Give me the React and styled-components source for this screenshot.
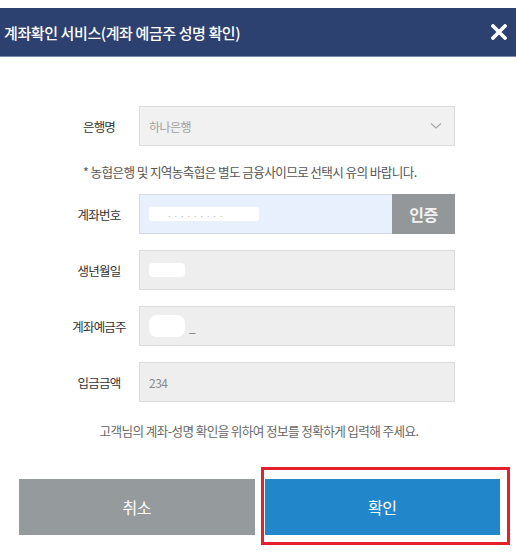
import React from 'react';
import styled, { createGlobalStyle } from 'styled-components';

const GlobalStyle = createGlobalStyle`
  html, body {
    margin: 0;
    padding: 0;
    background: #ffffff;
  }

  body {
    font-family: "Noto Sans CJK KR", "Noto Sans", sans-serif;
  }
`;

const Page = styled.div`
  width: 516px;
  height: 553px;
  padding-top: 8px;
  box-sizing: border-box;
  position: relative;
  overflow: hidden;
`;

const Header = styled.div`
  height: 48px;
  background: #2d4170;
  border-bottom: 1px solid #7d8bab;
  display: flex;
  align-items: center;
  justify-content: space-between;
  padding: 0 8px 0 4px;
`;

const Title = styled.h1`
  margin: 0;
  color: #ffffff;
  font-size: 15px;
  font-weight: 500;
  letter-spacing: -0.4px;
`;

const CloseButton = styled.button`
  border: 0;
  background: none;
  padding: 0;
  width: 18px;
  height: 18px;
  display: flex;
  align-items: center;
  justify-content: center;
`;

const Form = styled.div`
  display: flex;
  flex-direction: column;
  padding: 49px 0 0 59px;
`;

const Row = styled.div`
  display: flex;
  align-items: center;
  height: 40px;
  margin-bottom: ${(props) => props.gap ?? 16}px;
`;

const Label = styled.label`
  width: 80px;
  text-align: center;
  font-size: 12.5px;
  letter-spacing: -0.8px;
  color: #333333;
`;

const Field = styled.div`
  width: 316px;
  height: 40px;
  box-sizing: border-box;
  border: 1px solid #dcdcdc;
  background: #eeeeee;
  display: flex;
  align-items: center;
  padding-left: 9px;
  font-size: 12px;
  letter-spacing: -0.5px;
  color: #8a8a8a;
  position: relative;
`;

const SelectField = styled(Field)`
  background: #f1f1f1;
  justify-content: space-between;
  padding-right: 12px;
  color: #a0a0a0;
`;

const AccountGroup = styled.div`
  width: 316px;
  height: 40px;
  display: flex;
`;

const AccountInput = styled(Field)`
  flex: 1;
  width: auto;
  background: #e8f0fe;
  border-color: #d3d9e3;
  border-right: 0;
`;

const VerifyButton = styled.button`
  width: 63px;
  height: 40px;
  border: 0;
  background: #939799;
  color: #f2f2f2;
  font-family: inherit;
  font-size: 16px;
  font-weight: 700;
  letter-spacing: -0.5px;
`;

const Redaction = styled.span`
  display: inline-block;
  background: #ffffff;
  width: ${(props) => props.w}px;
  height: ${(props) => props.h}px;
  border-radius: ${(props) => props.r || 2}px;
  position: relative;
`;

const Dots = styled.span`
  position: absolute;
  left: 18px;
  top: 5px;
  font-size: 8px;
  letter-spacing: 2px;
  color: #b0b0b0;
  line-height: 1;
`;

const Dash = styled.span`
  margin-left: 4px;
  color: #777777;
`;

const Note = styled.p`
  margin: 17px 0 13px 24px;
  line-height: 18px;
  font-size: 12.6px;
  letter-spacing: -0.6px;
  color: #555555;
`;

const Notice = styled.p`
  margin: 20px 0 0;
  line-height: 18px;
  text-align: center;
  padding-left: 2px;
  font-size: 12.6px;
  letter-spacing: -0.6px;
  color: #666666;
`;

const Buttons = styled.div`
  display: flex;
  gap: 10px;
  padding: 39px 16px 0 19px;
`;

const ActionButton = styled.button`
  flex: 1;
  height: 56px;
  border: 0;
  color: #ffffff;
  background: ${(props) => (props.primary ? '#2287ca' : '#959a9c')};
  font-family: inherit;
  font-size: 16px;
  letter-spacing: -0.5px;
`;

const Highlight = styled.div`
  position: absolute;
  left: 261px;
  top: 467px;
  width: 249px;
  height: 78px;
  box-sizing: border-box;
  border: 3px solid #e5202a;
  pointer-events: none;
`;

const Chevron = () => (
  <svg width="12" height="8" viewBox="0 0 12 8">
    <path d="M1 1.5 L6 6 L11 1.5" fill="none" stroke="#a8a8a8" strokeWidth="1.3" />
  </svg>
);

const CloseIcon = () => (
  <svg width="16" height="16" viewBox="0 0 16 16">
    <path d="M2 2 L14 14 M14 2 L2 14" stroke="#ffffff" strokeWidth="3.6" strokeLinecap="square" />
  </svg>
);

export default function App() {
  return (
    <Page>
      <GlobalStyle />
      <Header>
        <Title>계좌확인 서비스(계좌 예금주 성명 확인)</Title>
        <CloseButton aria-label="닫기"><CloseIcon /></CloseButton>
      </Header>

      <Form>
        <Row gap={0}>
          <Label>은행명</Label>
          <SelectField>
            하나은행
            <Chevron />
          </SelectField>
        </Row>
        <Note>* 농협은행 및 지역농축협은 별도 금융사이므로 선택시 유의 바랍니다.</Note>

        <Row>
          <Label>계좌번호</Label>
          <AccountGroup>
            <AccountInput>
              <Redaction w={110} h={14} r={3}>
                <Dots>·········</Dots>
              </Redaction>
            </AccountInput>
            <VerifyButton>인증</VerifyButton>
          </AccountGroup>
        </Row>

        <Row>
          <Label>생년월일</Label>
          <Field>
            <Redaction w={36} h={14} r={4} />
          </Field>
        </Row>

        <Row>
          <Label>계좌예금주</Label>
          <Field>
            <Redaction w={36} h={22} r={8} />
            <Dash>_</Dash>
          </Field>
        </Row>

        <Row gap={0}>
          <Label>입금금액</Label>
          <Field>234</Field>
        </Row>
      </Form>

      <Notice>고객님의 계좌-성명 확인을 위하여 정보를 정확하게 입력해 주세요.</Notice>

      <Buttons>
        <ActionButton>취소</ActionButton>
        <ActionButton primary>확인</ActionButton>
      </Buttons>
      <Highlight />
    </Page>
  );
}
